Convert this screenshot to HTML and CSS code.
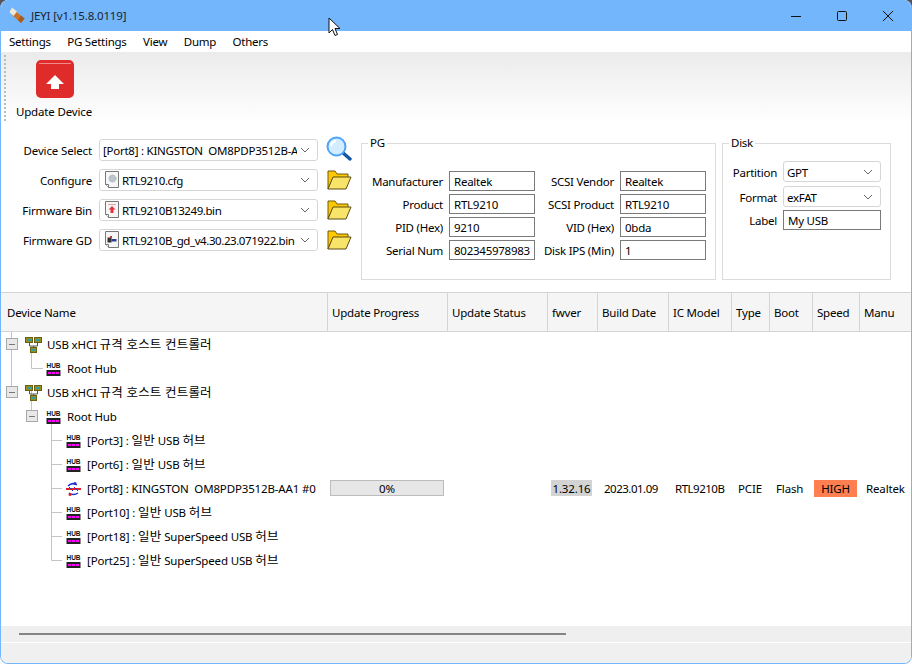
FILE: index.html
```html
<!DOCTYPE html>
<html lang="ko">
<head>
<meta charset="utf-8">
<title>JEYI</title>
<link rel="stylesheet" href="styles.css">
</head>
<body>
<svg class="defs" width="0" height="0" aria-hidden="true">
  <symbol id="hub" viewBox="0 0 15 14">
    <text x="7.5" y="5.800" text-anchor="middle" class="hub-text">HUB</text>
    <rect x="0.5" y="8" width="14" height="6" fill="#222"/>
    <rect x="2" y="10" width="3" height="2" fill="#f0f"/>
    <rect x="6" y="10" width="3" height="2" fill="#f0f"/>
    <rect x="10" y="10" width="3" height="2" fill="#f0f"/>
  </symbol>
  <symbol id="net" viewBox="0 0 17 16">
    <path d="M4.500 6v3h8V6M8.500 9v2" fill="none" stroke="#555" stroke-width="1"/>
    <rect x="0.5" y="0.5" width="7" height="5" fill="#9a8a20" stroke="#6b5f10"/>
    <rect x="2" y="2" width="4" height="2" fill="#2aa0a0"/>
    <rect x="9.500" y="0.5" width="7" height="5" fill="#9a8a20" stroke="#6b5f10"/>
    <rect x="11" y="2" width="4" height="2" fill="#2aa0a0"/>
    <rect x="5.500" y="10.500" width="6" height="5" fill="#9a8a20" stroke="#6b5f10"/>
    <rect x="7" y="12" width="3" height="2" fill="#2aa0a0"/>
  </symbol>
  <symbol id="folder" viewBox="0 0 25 21">
    <path d="M1 20V2h7l2 3h11v4H6L1 20z" fill="#ffc800" stroke="#6b5a10"/>
    <path d="M1 20 6 8h18l-5 12z" fill="#f9e46a" stroke="#5c4d10"/>
  </symbol>
  <symbol id="chev" viewBox="0 0 10 6">
    <path d="M1 1l4 4 4-4" fill="none" stroke="#666" stroke-width="1"/>
  </symbol>
  <symbol id="doc" viewBox="0 0 16 18">
    <path d="M1.500 0.5h13v16h-10l-3-3z" fill="#f6f6f6" stroke="#777"/>
    <path d="M1.500 13.500h3v3" fill="#fff" stroke="#777"/>
  </symbol>
</svg>

<div class="window">
  <header class="titlebar">
    <svg class="app-icon" width="17" height="17" viewBox="0 0 17 17">
      <path d="M6 4 15.500 11.500 12 16 3 8z" fill="#c9722a"/>
      <path d="M12 8.500 15.500 11.500 12 16 9 13z" fill="#a85a1c"/>
      <path d="M3 0.500 8 4.500 4.500 9 0.5 5z" fill="#efe8d8"/>
    </svg>
    <span class="title">JEYI [v1.15.8.0119]</span>
    <div class="win-controls">
      <svg width="12" height="12" viewBox="0 0 12 12"><path d="M1 6.500h10" stroke="#111"/></svg>
      <svg width="12" height="12" viewBox="0 0 12 12"><rect x="1.500" y="1.500" width="9" height="9" rx="1" fill="none" stroke="#111"/></svg>
      <svg width="12" height="12" viewBox="0 0 12 12"><path d="M1 1l10 10M11 1 1 11" stroke="#111"/></svg>
    </div>
  </header>

  <nav class="menubar">
    <span>Settings</span><span>PG Settings</span><span>View</span><span>Dump</span><span>Others</span>
  </nav>

  <div class="toolbar">
    <div class="grip"></div>
    <div class="tool-btn">
      <svg width="38" height="38" viewBox="0 0 38 38">
        <rect width="38" height="38" rx="5" fill="#e02b2b"/>
        <path d="M3 3.500h32" stroke="#f08a8a" stroke-width="1"/>
        <path d="M19 15 28 24h-5v5h-8v-5h-5z" fill="#fff"/>
      </svg>
      <span>Update Device</span>
    </div>
  </div>

  <section class="panel">
    <div class="form">
      <div class="form-row">
        <label>Device Select</label>
        <div class="combo"><span class="combo-text">[Port8] : KINGSTON  OM8PDP3512B-AA1 #0</span><svg class="chev"><use href="#chev"/></svg></div>
        <svg class="search" width="26" height="26" viewBox="0 0 26 26">
          <path d="M16 16l8 7" stroke="#1256a8" stroke-width="3.400" stroke-linecap="round"/>
          <circle cx="10.500" cy="10.500" r="9" fill="#d3ecff" stroke="#4ea4f4" stroke-width="2"/>
          <path d="M5 10a6 6 0 0 1 5-5" stroke="#fff" stroke-width="2" fill="none"/>
        </svg>
      </div>
      <div class="form-row">
        <label>Configure</label>
        <div class="combo">
          <svg class="doc" viewBox="0 0 16 18"><use href="#doc"/><circle cx="8.500" cy="7.500" r="3.500" fill="#bcc4cc" stroke="#a4adb6" stroke-dasharray="1.500 1"/></svg>
          <span class="combo-text file-text">RTL9210.cfg</span><svg class="chev"><use href="#chev"/></svg>
        </div>
        <svg class="folder"><use href="#folder"/></svg>
      </div>
      <div class="form-row">
        <label>Firmware Bin</label>
        <div class="combo">
          <svg class="doc" viewBox="0 0 16 18"><use href="#doc"/><path d="M4 3.500h8" stroke="#e8a0a0"/><path d="M8 5l3.500 3.500H9.500V12h-3V8.500H4.500z" fill="#e0343a"/></svg>
          <span class="combo-text file-text">RTL9210B13249.bin</span><svg class="chev"><use href="#chev"/></svg>
        </div>
        <svg class="folder"><use href="#folder"/></svg>
      </div>
      <div class="form-row">
        <label>Firmware GD</label>
        <div class="combo">
          <svg class="doc" viewBox="0 0 16 18"><use href="#doc"/><path d="M3.500 6.500h4v5h-4z" fill="#333"/><path d="M7.500 8h5v2.500h-5z" fill="#2a3f8f"/><path d="M6 5h2v2H6z" fill="#d0392e"/></svg>
          <span class="combo-text file-text">RTL9210B_gd_v4.30.23.071922.bin</span><svg class="chev"><use href="#chev"/></svg>
        </div>
        <svg class="folder"><use href="#folder"/></svg>
      </div>
    </div>

    <fieldset class="group group-pg">
      <legend>PG</legend>
      <div class="pg-grid">
        <label>Manufacturer</label><div class="field">Realtek</div>
        <label>SCSI Vendor</label><div class="field">Realtek</div>
        <label>Product</label><div class="field">RTL9210</div>
        <label>SCSI Product</label><div class="field">RTL9210</div>
        <label>PID (Hex)</label><div class="field">9210</div>
        <label>VID (Hex)</label><div class="field">0bda</div>
        <label>Serial Num</label><div class="field">802345978983</div>
        <label>Disk IPS (Min)</label><div class="field">1</div>
      </div>
    </fieldset>

    <fieldset class="group group-disk">
      <legend>Disk</legend>
      <div class="disk-grid">
        <label>Partition</label><div class="combo combo-small"><span class="combo-text">GPT</span><svg class="chev"><use href="#chev"/></svg></div>
        <label>Format</label><div class="combo combo-small"><span class="combo-text">exFAT</span><svg class="chev"><use href="#chev"/></svg></div>
        <label>Label</label><div class="field">My USB</div>
      </div>
    </fieldset>
  </section>

  <section class="table">
    <div class="thead cols">
      <div>Device Name</div><div>Update Progress</div><div>Update Status</div><div>fwver</div><div>Build Date</div><div>IC Model</div><div>Type</div><div>Boot</div><div>Speed</div><div>Manu</div>
    </div>
    <div class="tbody">
      <svg class="tree-lines" width="120" height="240" viewBox="0 0 120 240">
        <g fill="none" stroke="#c4c4c4">
          <path d="M10.500 0V6M10.500 18V54"/>
          <path d="M30.500 18V36.500H42"/>
          <path d="M30.500 54V78"/>
          <path d="M50.500 90V228.500H61M50.500 108.500H61M50.500 132.500H61M50.500 156.500H61M50.500 180.500H61M50.500 204.500H61"/>
        </g>
        <g class="expander">
          <rect x="5.500" y="6.500" width="11" height="11"/><path d="M8 12.500h6"/>
          <rect x="5.500" y="54.500" width="11" height="11"/><path d="M8 60.500h6"/>
          <rect x="25.500" y="78.500" width="11" height="11"/><path d="M28 84.500h6"/>
        </g>
      </svg>
      <div class="row lvl0"><svg class="ic-net"><use href="#net"/></svg><span>USB xHCI <span class="ko">규격 호스트 컨트롤러</span></span></div>
      <div class="row lvl1"><svg class="ic-hub"><use href="#hub"/></svg><span>Root Hub</span></div>
      <div class="row lvl0"><svg class="ic-net"><use href="#net"/></svg><span>USB xHCI <span class="ko">규격 호스트 컨트롤러</span></span></div>
      <div class="row lvl1"><svg class="ic-hub"><use href="#hub"/></svg><span>Root Hub</span></div>
      <div class="row lvl2"><svg class="ic-hub"><use href="#hub"/></svg><span>[Port3] : <span class="ko">일반</span> USB <span class="ko">허브</span></span></div>
      <div class="row lvl2"><svg class="ic-hub"><use href="#hub"/></svg><span>[Port6] : <span class="ko">일반</span> USB <span class="ko">허브</span></span></div>
      <div class="row cols data">
        <div class="cell-name lvl2">
          <svg class="ic-hub" viewBox="0 0 15 14">
            <path d="M0 7h15" stroke="#e0202a" stroke-width="2"/>
            <path d="M2 4c3-3 6-3 9-1M3 11c3 2 6 2 9 0" fill="none" stroke="#2030d0" stroke-width="1.500"/>
            <circle cx="9" cy="1.500" r="1.500" fill="#2030d0"/><circle cx="4" cy="12.500" r="1.500" fill="#e0202a"/>
            <path d="M3 5l4 4M8 5l4 4" stroke="#2030d0"/>
          </svg>
          <span>[Port8] : KINGSTON  OM8PDP3512B-AA1 #0</span>
        </div>
        <div><div class="progress">0%</div></div>
        <div></div>
        <div><span class="fw">1.32.16</span></div>
        <div class="pad tight">2023.01.09</div>
        <div class="pad tight">RTL9210B</div>
        <div class="pad">PCIE</div>
        <div class="pad">Flash</div>
        <div><span class="speed">HIGH</span></div>
        <div class="pad">Realtek</div>
      </div>
      <div class="row lvl2"><svg class="ic-hub"><use href="#hub"/></svg><span>[Port10] : <span class="ko">일반</span> USB <span class="ko">허브</span></span></div>
      <div class="row lvl2"><svg class="ic-hub"><use href="#hub"/></svg><span>[Port18] : <span class="ko">일반</span> SuperSpeed USB <span class="ko">허브</span></span></div>
      <div class="row lvl2"><svg class="ic-hub"><use href="#hub"/></svg><span>[Port25] : <span class="ko">일반</span> SuperSpeed USB <span class="ko">허브</span></span></div>
    </div>
    <div class="hscroll"><div class="thumb"></div></div>
  </section>

  <footer class="statusbar"></footer>
</div>

<svg class="cursor" width="14" height="20" viewBox="0 0 14 20">
  <path d="M1 1v15l3.500-3.500 2.500 6 2.500-1-2.500-6h5z" fill="#fff" stroke="#111"/>
</svg>
</body>
</html>
```

FILE: styles.css
```css
* { box-sizing: border-box; }
html, body { margin: 0; height: 100%; }
body {
  position: relative;
  overflow: hidden;
  background: linear-gradient(#555 0 8px, #fff 8px);
  font: 11.5px/16px "Noto Sans", "Noto Sans CJK KR", sans-serif;
  letter-spacing: -0.25px;
  color: #000;
}
.ko {
  font-size: 12.5px;
  letter-spacing: 0.2px;
}
.defs { position: absolute; }
.window {
  width: 912px;
  height: 664px;
  display: flex;
  flex-direction: column;
  background: #fff;
  border: 1px solid #74b6fb;
  border-top: 0;
  border-radius: 8px;
  overflow: hidden;
}
.titlebar {
  flex: 0 0 31px;
  display: flex;
  align-items: center;
  padding-left: 8px;
  background: #74b6fb;
  color: #1a2430;
  letter-spacing: -0.15px;
}
.app-icon { margin-right: 5px; }
.win-controls {
  margin-left: auto;
  display: flex;
  gap: 34px;
  padding-right: 17px;
}
.menubar {
  flex: 0 0 21px;
  display: flex;
  align-items: center;
  gap: 16.5px;
  padding-left: 8px;
  background: #fff;
}
.toolbar {
  flex: 0 0 70px;
  display: flex;
  background: linear-gradient(#ebebeb, #fff);
}
.grip {
  width: 2px;
  height: 66px;
  margin: 3px 0 0 3px;
  background: repeating-linear-gradient(#bbb 0 2px, transparent 2px 4px);
}
.tool-btn {
  display: flex;
  flex-direction: column;
  align-items: center;
  gap: 6px;
  margin: 8px 0 0 9px;
  width: 78px;
}
.tool-btn svg { margin-left: 2px; }
.tool-btn span { line-height: 16px; white-space: nowrap; letter-spacing: -0.15px; }
.panel {
  flex: 0 0 170px;
  display: flex;
  align-items: flex-start;
}
.form {
  width: 360px;
  padding-top: 17px;
  display: flex;
  flex-direction: column;
  gap: 8px;
}
.form-row {
  display: flex;
  align-items: center;
  height: 22px;
}
.form-row > label {
  width: 91px;
  padding-top: 2px;
  text-align: right;
  margin-right: 7px;
  letter-spacing: -0.15px;
}
.combo {
  width: 219px;
  height: 22px;
  display: flex;
  align-items: center;
  gap: 3px;
  padding: 0 7px 0 3px;
  background: #fff;
  border: 1px solid #d6d6d6;
  border-radius: 3px;
}
.combo-text {
  flex: 1;
  min-width: 0;
  padding-top: 2px;
  white-space: pre;
  overflow: hidden;
}
.file-text { letter-spacing: -0.42px; }
.chev { width: 10px; height: 6px; flex: none; }
.doc { width: 16px; height: 18px; flex: none; margin: 0 -1px 0 1px; }
.search { margin: -2px 0 0 8px; }
.folder { width: 25px; height: 21px; margin: -1px 0 0 9px; }
.group {
  margin: 13px 0 0;
  padding: 0;
  height: 145px;
  border: 1px solid #dcdcdc;
  min-width: 0;
}
.group legend {
  padding: 0 2px;
  margin-left: 6px;
  line-height: 16px;
}
.group-pg { width: 355px; }
.group-disk { width: 169px; margin-left: 6px; }
.field {
  height: 20px;
  line-height: 20px;
  padding-left: 4px;
  background: #fff;
  border: 1px solid #7a7a7a;
  white-space: nowrap;
  overflow: hidden;
}
.pg-grid {
  display: grid;
  grid-template-columns: 81px 86px 73px 86px;
  column-gap: 6px;
  row-gap: 3px;
  margin-top: 20px;
  align-items: center;
  text-align: right;
  white-space: nowrap;
}
.pg-grid label { padding-top: 2px; }
.pg-grid .field { text-align: left; }
.disk-grid {
  display: grid;
  grid-template-columns: 54px 98px;
  column-gap: 6px;
  row-gap: 4px;
  margin-top: 10px;
  align-items: center;
  text-align: right;
}
.disk-grid label { padding-top: 2px; }
.combo-small { width: 98px; height: 21px; text-align: left; }
.disk-grid .field { text-align: left; margin-top: -1px; }
.disk-grid label:last-of-type { margin-top: -1px; }
.table {
  flex: 1;
  display: flex;
  flex-direction: column;
  min-height: 0;
}
.cols {
  display: grid;
  grid-template-columns: 327px 120px 100px 50px 71px 63px 38px 43px 47px 51px;
}
.thead {
  flex: 0 0 40px;
  background: #f5f5f5;
  border-top: 1px solid #d4d4d4;
  border-bottom: 1px solid #d4d4d4;
  letter-spacing: -0.2px;
}
.thead > div {
  display: flex;
  align-items: center;
  padding: 2px 0 0 4px;
  border-right: 1px solid #d4d4d4;
  white-space: nowrap;
  overflow: hidden;
}
.thead > div:first-child { padding-left: 6px; }
.thead > div:last-child { border-right: 0; }
.tbody {
  position: relative;
  flex: 1;
  min-height: 0;
}
.tree-lines { position: absolute; left: 0; top: 0; }
.expander rect { fill: #e8e8e8; stroke: #a8a8a8; }
.expander path { stroke: #777; fill: none; }
.row {
  position: relative;
  height: 24px;
  display: flex;
  align-items: center;
  gap: 6px;
  padding-top: 2px;
  white-space: pre;
  letter-spacing: -0.15px;
}
.lvl0.row { gap: 5px; }
.data { display: grid; gap: 0; padding-top: 0; }
.data > div { display: flex; align-items: center; min-width: 0; }
.cell-name { gap: 6px; padding-top: 2px; }
.lvl0 { padding-left: 24px; }
.lvl1 { padding-left: 45px; }
.lvl2 { padding-left: 65px; }
.ic-net { width: 17px; height: 16px; flex: none; }
.ic-hub { width: 15px; height: 14px; flex: none; }
.hub-text { font: bold 6.500px "Liberation Sans", sans-serif; letter-spacing: 0; fill: #111; }
.pad { padding: 2px 0 0 6px; }
.tight { letter-spacing: -0.5px; }
.progress {
  width: 114px;
  height: 16px;
  margin-left: 2px;
  text-align: center;
  line-height: 15px;
  background: #e6e6e6;
  border: 1px solid #bcbcbc;
}
.fw {
  margin-left: 3px;
  width: 41px;
  height: 16px;
  text-align: center;
  line-height: 17px;
  background: #d3d3d3;
}
.speed {
  margin-left: 1px;
  width: 43px;
  height: 17px;
  text-align: center;
  line-height: 18px;
  background: #ff7f50;
}
.hscroll {
  flex: 0 0 16px;
  display: flex;
  align-items: center;
  padding-left: 18px;
  background: #efefef;
}
.thumb { width: 547px; height: 2px; background: #858585; }
.statusbar { flex: 0 0 21px; background: #f0f0f0; border-top: 1px solid #fff; }
.cursor { position: absolute; left: 328px; top: 17px; }
```
